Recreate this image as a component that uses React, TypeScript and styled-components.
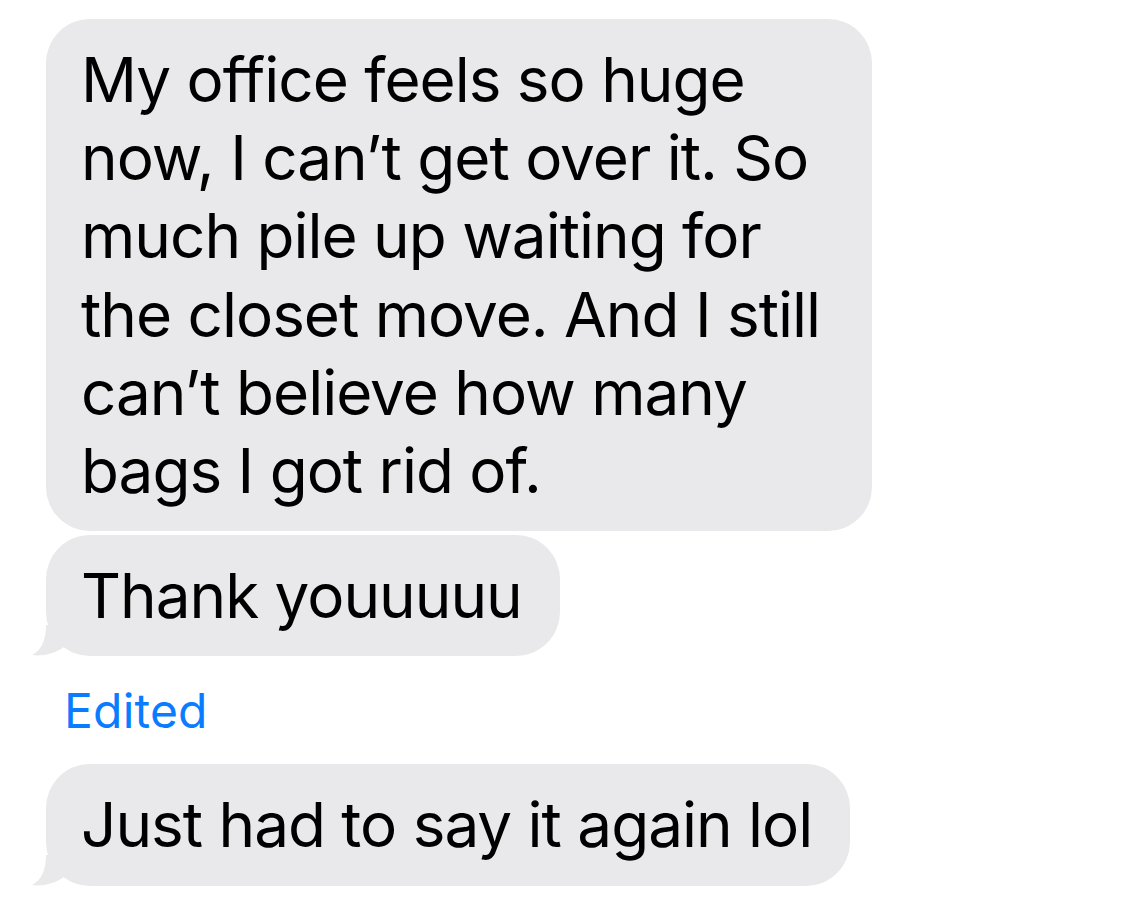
import styled, { createGlobalStyle } from 'styled-components'

const GlobalStyle = createGlobalStyle`
    html, body {
        margin: 0;
        padding: 0;
        background: #ffffff;
    }
    body {
        font-family: Inter, "Liberation Sans", Arial, sans-serif;
        -webkit-font-smoothing: antialiased;
    }
`

const Thread = styled.div`
    display: flex;
    flex-direction: column;
    align-items: flex-start;
    padding: 19px 0 0 46px;
    width: 1139px;
    height: 911px;
    box-sizing: border-box;
`

const Bubble = styled.div<{ $width: number; $gap?: number }>`
    position: relative;
    width: ${p => p.$width}px;
    box-sizing: border-box;
    margin-top: ${p => p.$gap ?? 0}px;
    padding: 22px 20px 21px 35px;
    background: #e9e9eb;
    border-radius: 44px;
    color: #000000;
    font-size: 62px;
    line-height: 78.2px;
    letter-spacing: -1px;
    white-space: nowrap;
`

const Tail = styled.svg`
    position: absolute;
    left: -14px;
    bottom: 0;
    width: 32px;
    height: 31px;
    fill: #e9e9eb;
`

const EditedLabel = styled.div`
    margin: 28px 0 0 18px;
    color: #0a7cff;
    font-size: 48px;
    line-height: 54px;
    letter-spacing: 0.2px;
`

const BubbleTail = () => (
    <Tail viewBox="0 0 32 31">
        <path d="M14 0 C14 14 10 25 0 30 C10 31.5 22 29 32 22 L32 0 Z" />
    </Tail>
)

const App = () => {
    return (
        <>
            <GlobalStyle />
            <Thread>
                <Bubble $width={826}>
                    My office feels so huge<br />
                    now, I can’t get over it. So<br />
                    much pile up waiting for<br />
                    the closet move. And I still<br />
                    can’t believe how many<br />
                    bags I got rid of.
                </Bubble>
                <Bubble $width={514} $gap={4}>
                    Thank youuuuu
                    <BubbleTail />
                </Bubble>
                <EditedLabel>Edited</EditedLabel>
                <Bubble $width={804} $gap={26}>
                    Just had to say it again lol
                    <BubbleTail />
                </Bubble>
            </Thread>
        </>
    )
}

export default App
